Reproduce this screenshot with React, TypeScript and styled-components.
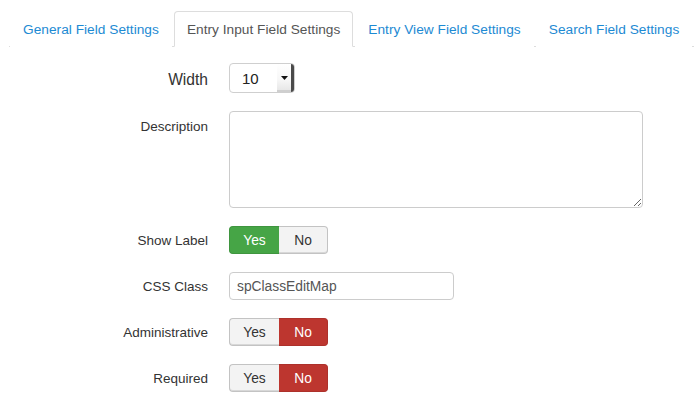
import React from "react";
import styled, { createGlobalStyle } from "styled-components";

const GlobalStyle = createGlobalStyle`
  html, body { margin: 0; padding: 0; background: #fff; }
  body { font-family: "Liberation Sans", Arial, sans-serif; color: #333; }
  * { box-sizing: border-box; }
`;

const Page = styled.div`
  width: 694px;
  height: 402px;
  overflow: hidden;
  padding-top: 11px;
`;

const TabBar = styled.ul`
  display: flex;
  margin: 0 0 0 9px;
  padding: 0 0 0 1px;
  list-style: none;
  border-bottom: 1px solid #ddd;
`;

const Tab = styled.li<{ $active?: boolean }>`
  margin: 0 2px -1px 0;
  padding: 9px 12px 7px;
  line-height: 18px;
  font-size: 13.7px;
  letter-spacing: 0.02px;
  white-space: nowrap;
  border: 1px solid ${(p) => (p.$active ? "#ddd" : "transparent")};
  border-bottom-color: ${(p) => (p.$active ? "#fff" : "transparent")};
  border-radius: 4px 4px 0 0;
  background: #fff;
  color: ${(p) => (p.$active ? "#555" : "#1d8ad3")};
`;

const Form = styled.div`
  display: flex;
  flex-direction: column;
  gap: 18px;
  padding: 16px 0 0 48px;
`;

const Row = styled.div<{ $top?: boolean }>`
  display: grid;
  grid-template-columns: 160px 1fr;
  column-gap: 21px;
  align-items: ${(p) => (p.$top ? "start" : "center")};
`;

const Label = styled.div<{ $big?: boolean; $top?: boolean }>`
  text-align: right;
  font-size: ${(p) => (p.$big ? "15.6px" : "13.5px")};
  color: #333;
  line-height: 18px;
  padding-top: ${(p) => (p.$top ? "7px" : p.$big ? "3px" : "2px")};
`;

const SelectBox = styled.div`
  position: relative;
  display: flex;
  align-items: center;
  width: 66px;
  height: 30px;
  border: 1px solid #cfcfcf;
  border-radius: 4px;
  background: #fff;
  font-size: 15px;
  color: #222;
  padding-left: 12px;
  overflow: hidden;
`;

const SelectArrow = styled.div`
  position: absolute;
  top: 0;
  right: 0;
  bottom: 0;
  width: 17px;
  background: linear-gradient(#ffffff 0%, #f7f7f7 55%, #e4e4e4 100%);
  border-right: 3px solid #4a4a4a;
  box-shadow: inset 0 -2px 0 #cfcfcf;
  display: flex;
  align-items: center;
  justify-content: center;
`;

const TextArea = styled.textarea`
  display: block;
  width: 414px;
  height: 97px;
  margin: 0;
  border: 1px solid #cccccc;
  border-radius: 4px;
  resize: both;
  font-family: inherit;
  font-size: 13.5px;
  padding: 4px 6px;
  outline: none;
`;

const TextInput = styled.input`
  display: block;
  width: 225px;
  height: 28px;
  margin: 0;
  border: 1px solid #cccccc;
  border-radius: 4px;
  padding: 0 7px;
  font-family: inherit;
  font-size: 13.8px;
  color: #555;
  outline: none;
`;

const ToggleGroup = styled.div`
  display: flex;
  height: 28px;
`;

const ToggleBtn = styled.div<{ $on?: "yes" | "no"; $first?: boolean }>`
  display: flex;
  align-items: center;
  justify-content: center;
  width: ${(p) => (p.$first ? "50px" : "49px")};
  font-size: 13.8px;
  border: 1px solid
    ${(p) => (p.$on === "yes" ? "#3f953f" : p.$on === "no" ? "#ad312b" : "#c3c3c3")};
  ${(p) => (p.$first ? "border-right: none;" : "border-left: none;")}
  border-radius: ${(p) => (p.$first ? "4px 0 0 4px" : "0 4px 4px 0")};
  background: ${(p) => (p.$on === "yes" ? "#46a546" : p.$on === "no" ? "#bd362f" : "#f3f3f3")};
  color: ${(p) => (p.$on ? "#fff" : "#333")};
  box-shadow: ${(p) => (p.$on ? "none" : "inset 0 -1px 0 #d8d8d8")};
`;

function Toggle({ value }: { value: "yes" | "no" }) {
  return (
    <ToggleGroup>
      <ToggleBtn $first $on={value === "yes" ? "yes" : undefined}>
        Yes
      </ToggleBtn>
      <ToggleBtn $on={value === "no" ? "no" : undefined}>No</ToggleBtn>
    </ToggleGroup>
  );
}

export default function App() {
  return (
    <Page>
      <GlobalStyle />
      <TabBar>
        <Tab>General Field Settings</Tab>
        <Tab $active>Entry Input Field Settings</Tab>
        <Tab>Entry View Field Settings</Tab>
        <Tab>Search Field Settings</Tab>
      </TabBar>
      <Form>
        <Row>
          <Label $big>Width</Label>
          <SelectBox>
            10
            <SelectArrow>
              <svg width="7" height="4" viewBox="0 0 7 4">
                <path d="M0 0 H7 L3.5 4 Z" fill="#111" />
              </svg>
            </SelectArrow>
          </SelectBox>
        </Row>
        <Row $top>
          <Label $top>Description</Label>
          <TextArea />
        </Row>
        <Row>
          <Label>Show Label</Label>
          <Toggle value="yes" />
        </Row>
        <Row>
          <Label>CSS Class</Label>
          <TextInput defaultValue="spClassEditMap" />
        </Row>
        <Row>
          <Label>Administrative</Label>
          <Toggle value="no" />
        </Row>
        <Row>
          <Label>Required</Label>
          <Toggle value="no" />
        </Row>
      </Form>
    </Page>
  );
}
